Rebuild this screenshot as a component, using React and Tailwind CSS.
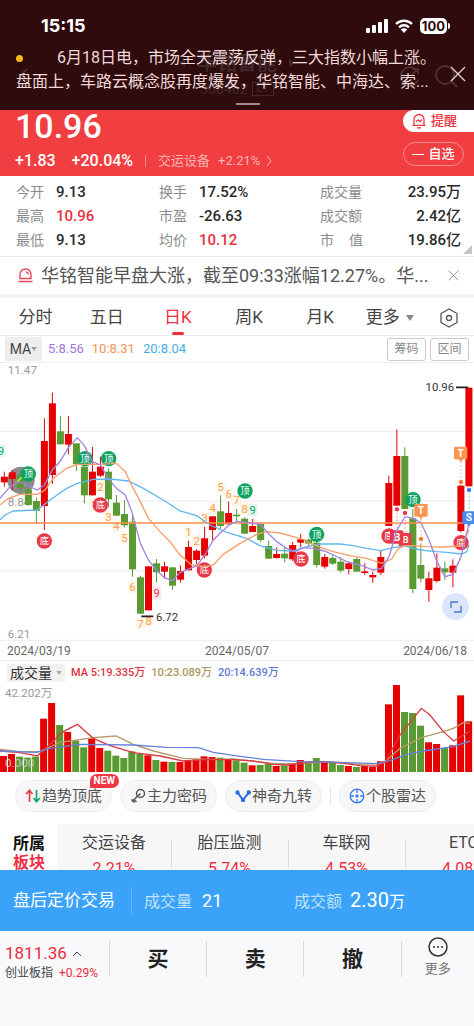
import React from "react";

const RED = "#e60000";
const GREEN = "#5a9a32";

// [colour, high, body top, body bottom, low]
const CANDLES = [
  ["R", 350, 365, 382, 395], ["R", 345, 352, 372, 405], ["G", 345, 360, 400, 415],
  ["G", 385, 403, 450, 450], ["G", 428, 438, 468, 507], ["R", 190, 258, 453, 525],
  ["R", 113, 145, 360, 387], ["G", 183, 229, 268, 268], ["R", 183, 237, 269, 298],
  ["G", 265, 265, 328, 348], ["G", 328, 335, 421, 445], ["R", 276, 350, 421, 421],
  ["R", 305, 335, 362, 366], ["G", 340, 350, 433, 457], ["G", 420, 443, 482, 482],
  ["G", 435, 477, 511, 517], ["G", 482, 500, 643, 665], ["G", 662, 667, 776, 776],
  ["R", 634, 634, 766, 766], ["G", 612, 625, 652, 683], ["R", 620, 634, 650, 670],
  ["G", 637, 637, 692, 705], ["R", 631, 648, 674, 683], ["R", 557, 576, 646, 646],
  ["R", 583, 587, 615, 628], ["R", 515, 550, 602, 610], ["R", 484, 484, 525, 555],
  ["G", 421, 469, 513, 523], ["R", 440, 474, 508, 508], ["G", 462, 479, 484, 500],
  ["G", 487, 491, 536, 536], ["R", 492, 513, 531, 531], ["G", 505, 507, 555, 562],
  ["G", 557, 573, 611, 611], ["R", 577, 597, 609, 611], ["G", 577, 596, 610, 622],
  ["R", 560, 570, 613, 618], ["R", 536, 553, 563, 577], ["G", 550, 554, 566, 575],
  ["G", 560, 563, 630, 638], ["R", 597, 606, 635, 641], ["G", 597, 609, 626, 630],
  ["G", 605, 620, 647, 653], ["R", 620, 625, 642, 658], ["G", 608, 612, 650, 650],
  ["R", 625, 649, 654, 660], ["R", 650, 660, 667, 683], ["R", 585, 606, 653, 660],
  ["R", 362, 384, 513, 513], ["R", 223, 303, 452, 452], ["G", 277, 303, 462, 462],
  ["G", 462, 490, 702, 715], ["G", 565, 630, 671, 682], ["R", 650, 670, 705, 740],
  ["R", 595, 638, 678, 683], ["G", 620, 640, 652, 675], ["R", 613, 632, 653, 697],
  ["R", 390, 392, 528, 532], ["R", 98, 98, 394, 394],
];

const VOLUME_TOPS = [
  303, 297, 305, 308, 305, 191, 144, 210, 231, 258, 277, 251, 279, 287, 302,
  309, 289, 297, 301, 315, 320, 321, 321, 315, 313, 304, 306, 308, 314, 316,
  323, 331, 330, 327, 333, 331, 325, 315, 319, 309, 319, 322, 330, 333, 336,
  333, 335, 319, 148, 86, 171, 174, 212, 262, 267, 279, 271, 121, 199,
];

const MA5 = "0,430 30,395 60,380 85,393 112,405 133,390 157,345 181,318 205,278 232,248 253,272 277,320 301,330 325,370 349,400 376,420 397,475 421,565 445,615 469,645 493,668 517,677 541,652 565,642 590,633 614,600 640,555 665,530 690,508 711,499 745,503 781,508 805,535 830,560 860,580 885,590 910,578 940,580 973,588 1000,600 1040,620 1080,630 1120,645 1145,640 1167,605 1191,525 1215,485 1239,490 1263,503 1287,555 1311,620 1335,665 1359,658 1383,605 1407,505";
const MA10 = "0,450 25,430 60,418 112,418 135,405 160,370 200,340 232,328 301,328 349,325 376,350 397,395 421,440 445,490 480,530 510,560 540,600 575,630 614,635 640,630 670,598 720,565 770,538 800,530 840,534 880,545 910,553 930,565 970,580 1000,590 1050,602 1100,610 1145,625 1175,612 1195,580 1215,572 1240,572 1280,575 1330,576 1380,573 1395,550 1407,525";
const MA20 = "0,495 15,480 40,468 112,465 150,435 200,400 232,385 280,373 330,372 385,378 430,400 490,435 540,468 590,482 630,510 680,532 740,550 780,572 830,586 880,588 920,575 960,567 1020,567 1060,572 1100,580 1140,587 1180,578 1215,573 1260,585 1310,590 1340,592 1385,597 1400,590 1407,570";

const VMA5 = "0,288 60,293 112,303 150,268 190,230 232,208 280,250 330,272 400,293 480,303 550,318 620,314 700,314 760,318 820,328 860,330 900,325 960,320 1030,325 1080,332 1130,333 1155,322 1200,240 1264,160 1290,180 1330,230 1361,258 1410,228";
const VMA10 = "0,283 60,290 120,290 180,262 232,255 280,248 348,243 400,268 460,288 550,310 620,313 700,312 820,325 900,326 990,320 1080,328 1150,325 1200,280 1264,248 1330,230 1360,220 1390,203 1410,205";
const VMA20 = "0,288 110,292 150,280 240,268 400,270 500,277 595,278 640,292 720,304 790,313 900,320 1020,322 1130,326 1170,317 1220,298 1270,288 1360,275 1410,258";

// [digit, x, y, tone]
const COUNTS = [
  ["2", 301, 395, "o"], ["1", 281, 450, "o"], ["3", 325, 487, "o"], ["4", 349, 513, "o"],
  ["5", 373, 549, "o"], ["6", 397, 697, "o"], ["7", 421, 806, "o"], ["8", 446, 797, "o"],
  ["9", 470, 713, "r"], ["1", 565, 531, "o"], ["2", 590, 558, "o"], ["3", 614, 489, "o"],
  ["4", 638, 460, "o"], ["5", 662, 395, "o"], ["6", 686, 416, "o"], ["7", 710, 434, "o"],
  ["8", 734, 461, "o"], ["9", 758, 465, "g"], ["9", 3, 288, "g"],
];
const TONES = {
  o: ["#ffa043", "#fff3e6"],
  r: ["#e8394b", "#fde0e8"],
  g: ["#0fa968", "#d8f5e8"],
};

const TOPS = [[85, 357], [255, 311], [326, 311], [735, 408], [950, 538], [1239, 434]];
const BOTTOMS = [[133, 558], [301, 450], [613, 645], [903, 612], [1167, 543], [1383, 563]];

function Disc({ x, y, label, fill }) {
  return (
    <g>
      <circle cx={x} cy={y} r="23" fill={fill} />
      <text x={x} y={y + 10} fontSize="28" fill="#fff" textAnchor="middle">{label}</text>
    </g>
  );
}

function Flag({ x, y, label, fill }) {
  return (
    <g>
      <rect x={x - 20} y={y - 20} width="40" height="38" rx="4" fill={fill} />
      <path d={`M${x - 7} ${y + 17}h14l-7 9z`} fill={fill} />
      <text x={x} y={y + 10} fontSize="31" fontWeight="700" fill="#fff" textAnchor="middle">{label}</text>
    </g>
  );
}

function PriceChart() {
  return (
    <svg viewBox="0 21 1422 837" className="block w-full" role="img" aria-label="日K线图">
      {[22, 229, 438, 648, 856].map((y) => (
        <line key={y} x1="0" x2="1422" y1={y} y2={y} stroke="#ececf0" strokeWidth="3" />
      ))}
      <circle cx="63" cy="376" r="41" fill="#8d8a8d" />
      <text x="23" y="58" fontSize="35" fill="#999">11.47</text>
      <text x="23" y="453" fontSize="35" fill="#999">8.84</text>
      <text x="23" y="848" fontSize="35" fill="#999">6.21</text>
      {CANDLES.map(([c, high, top, bottom, low], i) => {
        const x = 13 + 24.03 * i;
        const fill = c === "R" ? RED : GREEN;
        return (
          <g key={i} fill={fill}>
            <rect x={x - 1.5} y={high} width="3" height={low - high} />
            <rect x={x - 10.5} y={top} width="21" height={bottom - top} />
          </g>
        );
      })}
      <path d="M52 380l18-18" stroke="#b5e04c" strokeWidth="5" />
      {COUNTS.map(([d, x, y, tone], i) => (
        <g key={i}>
          <rect x={x - 13} y={y - 19} width="26" height="38" fill={TONES[tone][1]} opacity="0.75" />
          <text x={x} y={y + 12} fontSize="34" fill={TONES[tone][0]} textAnchor="middle">{d}</text>
        </g>
      ))}
      <line x1="0" x2="1422" y1="504" y2="504" stroke="#ff8f4a" strokeWidth="5" />
      {TOPS.map(([x, y]) => <Disc key={x} x={x} y={y} label="顶" fill="#0fa263" />)}
      {BOTTOMS.map(([x, y]) => <Disc key={x} x={x} y={y} label="底" fill="#e8394b" />)}
      <rect x="1196" y="534" width="38" height="40" rx="5" fill="#e8394b" />
      <text x="1217" y="565" fontSize="29" fontWeight="700" fill="#fff" textAnchor="middle">B</text>
      <rect x="1170" y="526" width="40" height="40" rx="5" fill="#e8394b" />
      <text x="1191" y="557" fontSize="31" fontWeight="700" fill="#fff" textAnchor="middle">B</text>
      <g fill="none" strokeWidth="4">
        <polyline points={MA20} stroke="#62b8ee" />
        <polyline points={MA10} stroke="#f5a06c" />
        <polyline points={MA5} stroke="#a385e0" />
      </g>
      <g strokeWidth="3" strokeDasharray="5 6">
        <path d="M1191 472V526M1215 484V534" stroke="#e58a94" />
        <path d="M1263 492V542M1383 320V372" stroke="#f2ae84" />
        <path d="M1407 412V470" stroke="#8fb3f0" />
      </g>
      <g stroke="#fff" strokeWidth="3">
        <circle cx="1191" cy="463" r="8" fill="#e8394b" />
        <circle cx="1215" cy="474" r="8" fill="#e8394b" />
        <circle cx="1263" cy="552" r="8" fill="#f57a2e" />
        <circle cx="1383" cy="381" r="8" fill="#f57a2e" />
        <circle cx="1407" cy="405" r="8" fill="#2f7bf0" />
      </g>
      <Flag x={1263} y={467} label="T" fill="#f99550" />
      <Flag x={1382} y={295} label="T" fill="#f99550" />
      <Flag x={1407} y={489} label="S" fill="#4a8af0" />
      <path d="M424 784h36M1368 97h36" stroke="#222" strokeWidth="5" />
      <text x="468" y="799" fontSize="34" fill="#333">6.72</text>
      <text x="1362" y="109" fontSize="34" fill="#333" textAnchor="end">10.96</text>
    </svg>
  );
}

function VolumeChart() {
  return (
    <svg viewBox="0 90 1422 262" className="block w-full" role="img" aria-label="成交量图">
      {VOLUME_TOPS.map((top, i) => (
        <rect key={i} x={24.06 * i} y={top} width="21" height={351 - top} fill={CANDLES[i][0] === "R" ? RED : GREEN} />
      ))}
      <g fill="none" strokeWidth="4">
        <polyline points={VMA10} stroke="#b39a66" />
        <polyline points={VMA5} stroke="#dc3a45" />
        <polyline points={VMA20} stroke="#6682dc" />
      </g>
      <text x="15" y="126" fontSize="35" fill="#999">42.202万</text>
      <text x="15" y="337" fontSize="35" fill="#c9c9c0">0.000</text>
    </svg>
  );
}

const STATS = [
  [["今开", "9.13"], ["换手", "17.52%"], ["成交量", "23.95万"]],
  [["最高", "10.96", true], ["市盈", "-26.63"], ["成交额", "2.42亿"]],
  [["最低", "9.13"], ["均价", "10.12", true], ["市值", "19.86亿"]],
];

const CrossIcon = ({ className }) => (
  <svg viewBox="0 0 16 16" className={className} fill="none" stroke="currentColor" strokeWidth="1.3" aria-hidden="true">
    <path d="M1 1l14 14M15 1L1 15" />
  </svg>
);

const Down = ({ className }) => (
  <svg viewBox="0 0 8 6" className={className} aria-hidden="true"><path d="M0 0h8L4 6z" fill="currentColor" /></svg>
);

function Header() {
  return (
    <header className="relative bg-[#2f0b0d] h-[110px]">
      <div className="absolute inset-x-0 top-[49px] flex flex-col items-center text-[#40292c]" aria-hidden="true">
        <div className="flex items-center gap-3 text-xl leading-7 font-bold">
          <svg viewBox="0 0 6 8" className="h-2 w-1.5"><path d="M6 0v8L0 4z" fill="currentColor" /></svg>
          华铭智能
          <svg viewBox="0 0 6 8" className="h-2 w-1.5"><path d="M0 0v8l6-4z" fill="currentColor" /></svg>
        </div>
        <div className="flex items-center gap-1 text-sm leading-6">300462<span className="border border-[#40292c] px-1 text-[11px] leading-3">L1</span></div>
      </div>
      <svg viewBox="0 0 64 24" className="absolute right-3 top-[64px] h-6 w-16" fill="none" stroke="#493034" strokeWidth="2" aria-hidden="true">
        <path d="M19 7a9 9 0 1 0 1 9M12 12l8-7m0 5V5h-5" /><circle cx="47" cy="11" r="9" /><path d="M54 18l5 5" />
      </svg>
      <svg viewBox="0 0 8 14" className="absolute top-[68px] left-5 h-3.5 w-2" fill="none" stroke="#493034" strokeWidth="2" aria-hidden="true"><path d="M7 1L1 7l6 6" /></svg>
      <div className="relative flex h-[46px] items-end justify-between pl-[41px] pr-6 text-white">
        <span className="font-['Inter'] text-lg leading-6 font-bold mb-2">15:15</span>
        <div className="mb-3 flex items-center gap-[7px]">
          <svg viewBox="0 0 22 14" className="h-3.5 w-[22px]" fill="#fff" aria-hidden="true">
            <rect x="0" y="9" width="4" height="5" rx="1" /><rect x="6" y="6" width="4" height="8" rx="1" /><rect x="12" y="3" width="4" height="11" rx="1" /><rect x="18" y="0" width="4" height="14" rx="1" />
          </svg>
          <svg viewBox="0 0 18 14" className="h-3.5 w-[18px]" fill="none" stroke="#fff" strokeWidth="2.4" aria-hidden="true">
            <path d="M1 5a11.5 11.5 0 0 1 16 0M4 8.4a7 7 0 0 1 10 0" /><path d="M9 14l-3.2-3.4a4.6 4.6 0 0 1 6.4 0z" fill="#fff" stroke="none" />
          </svg>
          <div className="flex items-center gap-px">
            <span className="rounded-[5px] bg-white px-[2px] font-['Inter'] text-[13px] leading-4 font-bold text-[#2f0b0d]">100</span>
            <span className="h-1.5 w-0.5 rounded-r bg-white" />
          </div>
        </div>
      </div>
      <div className="relative pl-4 text-base leading-6 whitespace-nowrap text-[#f0d9da]">
        <p className="flex items-center"><span className="mr-[34px] size-[7px] rounded-full bg-[#fbb916]" />6月18日电，市场全天震荡反弹，三大指数小幅上涨。</p>
        <p>盘面上，车路云概念股再度爆发，华铭智能、中海达、索...</p>
        <button aria-label="关闭快讯" className="absolute right-2 top-5 text-[#e8d4d5]"><CrossIcon className="size-4" /></button>
      </div>
      <span className="absolute left-1/2 top-[103px] ml-[11px] h-0.5 w-6 -translate-x-1/2 bg-[#a58a8c]" />
    </header>
  );
}

function Quote() {
  return (
    <section className="flex justify-between bg-[#f03e41] pl-[15px] text-white">
      <div>
        <div className="text-[34px] leading-8 font-medium">10.96</div>
        <div className="flex h-[34px] items-center pt-1 text-base font-medium">
          <span>+1.83</span><span className="ml-4">+20.04%</span>
          <span className="mx-3 h-3 w-px bg-white/40" />
          <a href="#sector" className="flex items-center text-[13px] font-normal text-[#fbb3b4]">交运设备<span className="ml-2">+2.21%</span>
            <svg viewBox="0 0 6 10" className="ml-1.5 h-2.5 w-1.5" fill="none" stroke="currentColor" aria-hidden="true"><path d="M1 0l4 5-4 5" /></svg>
          </a>
        </div>
      </div>
      <div className="flex flex-col items-end">
        <button className="flex h-[22px] w-[71px] items-center gap-1 rounded-l-full bg-white pl-2 text-[13px] font-medium text-[#ee3542]">
          <svg viewBox="0 0 16 16" className="size-4" fill="none" stroke="currentColor" strokeWidth="1.3" aria-hidden="true"><path d="M3 12V6.500a5 5 0 0 1 10 0V12M1.500 12.400h13M6 14.800h4M5 8.500l2-1.500 2 1.500 2-2" /></svg>
          提醒
        </button>
        <button className="mr-2.5 mt-2.5 mb-2.5 flex h-6 w-[61px] items-center justify-center gap-1 rounded-full border border-[#f8898b] text-[13px] font-medium">
          <span className="h-px w-3 bg-white" />自选
        </button>
      </div>
    </section>
  );
}

function Tabs() {
  const tabs = ["分时", "五日", "日K", "周K", "月K"];
  return (
    <nav className="flex h-[38px] border-b border-[#ececf0] pt-0.5 text-[17px] text-[#444]">
      {tabs.map((t) => (
        <button key={t} className={t === "日K" ? "relative flex-[71] text-[#ee2f3d]" : "relative flex-[71]"}>
          {t}
          {t === "日K" && <span className="absolute bottom-0 left-1/2 h-[3px] w-3 -translate-x-1/2 rounded-full bg-[#ee2f3d]" />}
        </button>
      ))}
      <button className="flex flex-[68] items-center justify-center gap-1.5">更多<Down className="h-1.5 w-2 text-[#888]" /></button>
      <button aria-label="设置" className="flex flex-[50] items-center justify-center">
        <svg viewBox="0 0 20 20" className="size-5" fill="none" stroke="#555" strokeWidth="1.3" aria-hidden="true"><path d="M10 1l8 4.500v9L10 19l-8-4.500v-9z" strokeLinejoin="round" /><circle cx="10" cy="10" r="2.500" /></svg>
      </button>
    </nav>
  );
}

const pill = "relative flex h-8 shrink-0 items-center gap-px rounded-full border border-[#eeeeef] bg-[#f7f7f8] px-[9px] text-[15px] text-[#555]";

function Tools() {
  return (
    <div className="flex items-center gap-2 overflow-hidden pt-2 pb-3 pl-[15px]">
      <button className={pill}>
        <svg viewBox="0 0 16 16" className="size-4" fill="none" strokeWidth="1.7" aria-hidden="true"><path d="M4.500 14V2.500M1 6l3.500-3.700L7.500 6" stroke="#e8394b" /><path d="M11.500 2v11.500M8.500 10l3 3.700L15 10" stroke="#14a36a" /></svg>
        趋势顶底
        <span className="absolute -top-[7px] -right-2 rounded-full rounded-bl-none bg-[#f03844] px-1 text-[10px] leading-[14px] font-bold text-white">NEW</span>
      </button>
      <button className={pill}>
        <svg viewBox="0 0 16 16" className="size-4" fill="none" stroke="#555" strokeWidth="1.5" aria-hidden="true"><circle cx="10.500" cy="5.500" r="4" /><path d="M10.500 5.500L2 13.500M4 11.500l2.500 2.500M1.500 11.500l3 3" /></svg>
        主力密码
      </button>
      <button className={pill}>
        <svg viewBox="0 0 16 16" className="size-4" fill="none" stroke="#2d6be0" strokeWidth="2" aria-hidden="true"><path d="M3 5l5 7 5.500-7" /><circle cx="2.500" cy="4.500" r="1.200" fill="#2d6be0" /><circle cx="8" cy="12" r="1.200" fill="#2d6be0" /><circle cx="13.800" cy="4.500" r="1.200" fill="#2d6be0" /></svg>
        神奇九转
      </button>
      <span className="h-5 w-px bg-[#e6e6e8]" />
      <button className={pill}>
        <svg viewBox="0 0 16 16" className="size-4" fill="none" stroke="#3a7bea" strokeWidth="1.300" aria-hidden="true"><circle cx="8" cy="8" r="6.800" /><path d="M8 1v4M8 11v4M1 8h4M11 8h4" /><circle cx="8" cy="8" r="1" fill="#3a7bea" /></svg>
        个股雷达
      </button>
    </div>
  );
}

const SECTORS = [["交运设备", "2.21%"], ["胎压监测", "5.74%"], ["车联网", "4.53%"], ["ETC", "4.08%"]];

export default function App() {
  return (
    <main className="w-full overflow-hidden bg-white font-['Roboto','Noto_Sans_CJK_SC',sans-serif]">
      <Header />
      <Quote />
      <section className="relative border-b border-[#ececf0] pt-1 pr-[13px] pb-1 pl-4">
        {STATS.map((row, r) => (
          <dl key={r} className="grid grid-cols-[143fr_161fr_141fr] text-[15px] leading-6 font-medium">
            {row.map(([label, value, up], c) => (
              <div key={label} className={c === 2 ? "flex justify-between" : "flex gap-3"}>
                <dt className={label === "市值" ? "flex w-[43px] justify-between text-sm leading-6 font-normal text-[#8b8b8e]" : "text-sm leading-6 font-normal text-[#8b8b8e]"}>
                  {label === "市值" ? <><span>市</span><span>值</span></> : label}
                </dt>
                <dd className={up ? "text-[#e8303e]" : "text-[#2a2a2c]"}>{value}</dd>
              </div>
            ))}
          </dl>
        ))}
        <svg viewBox="0 0 9 9" className="absolute right-0.5 bottom-0.5 size-[9px]" aria-hidden="true"><path d="M9 0v9H0z" fill="#c4c4c6" /></svg>
      </section>
      <section className="flex h-[41px] items-center border-b-4 border-[#f2f2f8] pr-[15px] pl-[18px]">
        <svg viewBox="0 0 15 15" className="mr-2 size-[15px] shrink-0" fill="none" stroke="#ea4753" strokeWidth="1.400" aria-hidden="true"><path d="M2 10.500V6.500a5.500 5.500 0 0 1 11 0v4zM.5 13.500h14M8 4a3 3 0 0 1 2.500 2.500" /></svg>
        <p className="flex-1 truncate text-lg text-[#555]">华铭智能早盘大涨，截至09:33涨幅12.27%。华...</p>
        <button aria-label="关闭提示" className="text-[#8a8a8a]"><CrossIcon className="size-[11px]" /></button>
      </section>
      <Tabs />
      <section>
        <div className="flex h-[26px] items-center pr-[5px] pl-[5px] text-[13px]">
          <button className="flex h-6 w-[37px] items-center justify-center bg-[#ededee] text-sm text-[#444]">MA<Down className="h-1 w-1.5 text-[#999]" /></button>
          <span className="ml-1.5 text-[#9a78e0]">5:8.56</span>
          <span className="ml-2 text-[#f29456]">10:8.31</span>
          <span className="ml-2 text-[#46aee8]">20:8.04</span>
          <button className="ml-auto h-[23px] w-[39px] rounded-[3px] border border-[#ccc] text-xs text-[#888]">筹码</button>
          <button className="ml-1 h-[23px] w-[39px] rounded-[3px] border border-[#ccc] text-xs text-[#888]">区间</button>
        </div>
        <div className="relative">
          <PriceChart />
          <button aria-label="全屏" className="absolute right-[5px] bottom-[21px] flex size-[27px] items-center justify-center rounded-full bg-[#dbe6fb]">
            <svg viewBox="0 0 12 12" className="size-3" fill="none" stroke="#4774d8" strokeWidth="1.300" aria-hidden="true"><path d="M1 7V1h7M11 5v6H4" /></svg>
          </button>
        </div>
        <div className="flex h-5 items-center justify-between border-b border-[#ececf0] px-[7px] text-xs text-[#666]">
          <span>2024/03/19</span><span>2024/05/07</span><span>2024/06/18</span>
        </div>
      </section>
      <section>
        <div className="flex h-6 items-center pl-[7px] text-[11px] font-medium">
          <button className="flex h-[18px] w-[58px] items-center justify-center gap-1 bg-[#f1f1f1] text-sm font-normal text-[#333]">成交量<Down className="h-1 w-1.5 text-[#aaa]" /></button>
          <span className="ml-1.5 text-[#dd3344]">MA 5:19.335万</span>
          <span className="ml-1.5 text-[#ac9360]">10:23.089万</span>
          <span className="ml-1.5 text-[#5e78d6]">20:14.639万</span>
        </div>
        <VolumeChart />
      </section>
      <Tools />
      <section id="sector" className="flex h-[46px] overflow-hidden">
        <h2 className="w-[57px] shrink-0 pt-2.5 pl-[13px] text-base leading-[19px] font-bold text-[#111]">所属<br /><span className="text-[#ee2f45]">板块</span></h2>
        <ul className="flex flex-1 bg-[#f7f7f8]">
          {SECTORS.map(([name, pct], i) => (
            <li key={name} className={(i === 0 ? "w-[114px]" : "w-[117px]") + " relative shrink-0 pt-1.5 text-center text-base leading-[26px] text-[#444]"}>
              {i > 0 && <span className="absolute top-4 left-0 h-7 w-px bg-[#dedee0]" />}
              {name}<div className="text-[#ee2f45]">{pct}</div>
            </li>
          ))}
        </ul>
      </section>
      <section className="flex h-[61px] items-center bg-[#3aa2f8] pl-[13px] text-white">
        <span className="text-[17px]">盘后定价交易</span>
        <span className="mr-3 ml-4 h-7 w-px bg-[#62b7fc]" />
        <div className="w-[150px] text-lg"><span className="mr-2.5 text-base text-[#bfe2ff]">成交量</span>21</div>
        <div className="text-lg"><span className="mr-2 text-base text-[#bfe2ff]">成交额</span><span className="text-xl">2.30</span><span className="text-base">万</span></div>
      </section>
      <footer className="flex bg-[#f9f9fc] pt-2.5 pb-[49px]">
        <a href="#index" className="w-[109px] shrink-0 pl-[5px] text-xs leading-4 whitespace-nowrap text-[#444]">
          <span className="flex items-center gap-1.5 text-[17px] leading-6 text-[#ec2c3c]">1811.36
            <svg viewBox="0 0 8 5" className="h-[5px] w-2" fill="none" stroke="#444" aria-hidden="true"><path d="M0 5l4-4 4 4" /></svg>
          </span>
          创业板指<span className="ml-1.5 text-[#ec2c3c]">+0.29%</span>
        </a>
        {["买", "卖", "撤"].map((t) => (
          <button key={t} className="h-9 flex-[97] border-l border-[#d8d8dc] text-[21px] font-bold text-[#222]">{t}</button>
        ))}
        <button className="flex h-9 flex-[73] flex-col items-center border-l border-[#d8d8dc] text-[13px] leading-4 text-[#777]">
          <svg viewBox="0 0 20 20" className="-mt-1 mb-1 size-5 shrink-0" fill="none" stroke="#333" strokeWidth="1.500" aria-hidden="true"><circle cx="10" cy="10" r="9" /><g fill="#333" stroke="none"><circle cx="6" cy="10" r="1" /><circle cx="10" cy="10" r="1" /><circle cx="14" cy="10" r="1" /></g></svg>
          更多
        </button>
      </footer>
    </main>
  );
}
